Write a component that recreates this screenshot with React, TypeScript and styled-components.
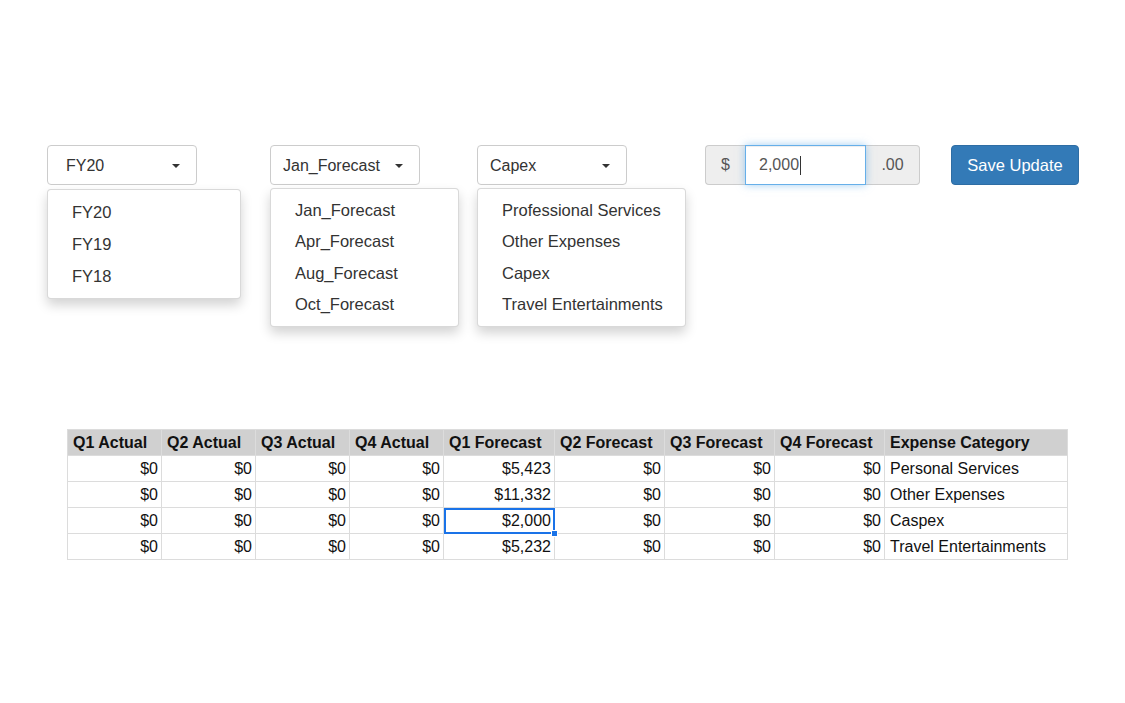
import React from "react";
import styled, { createGlobalStyle } from "styled-components";

const GlobalStyle = createGlobalStyle`
    html, body {
        margin: 0;
        padding: 0;
        background: #fff;
    }
    body {
        font-family: "Liberation Sans", Arial, Helvetica, sans-serif;
        color: #333;
    }
`

const dropdowns = [
    { value: "FY20", options: ["FY20", "FY19", "FY18"], padLeft: 18, menuWidth: 194, menuTop: 4, rowHeight: 32 },
    { value: "Jan_Forecast", options: ["Jan_Forecast", "Apr_Forecast", "Aug_Forecast", "Oct_Forecast"], padLeft: 12, menuWidth: 189, menuTop: 3, rowHeight: 31.3 },
    { value: "Capex", options: ["Professional Services", "Other Expenses", "Capex", "Travel Entertainments"], padLeft: 12, menuWidth: 209, menuTop: 3, rowHeight: 31.3 },
];

const rows = [
    { q1f: "$5,423", category: "Personal Services" },
    { q1f: "$11,332", category: "Other Expenses" },
    { q1f: "$2,000", category: "Caspex", selected: true },
    { q1f: "$5,232", category: "Travel Entertainments" },
];

const headers = ["Q1 Actual", "Q2 Actual", "Q3 Actual", "Q4 Actual", "Q1 Forecast", "Q2 Forecast", "Q3 Forecast", "Q4 Forecast", "Expense Category"];
const colWidths = [94, 94, 94, 94, 111, 110, 110, 110, 183];

const App = () => {
    return (
        <Page>
            <GlobalStyle />
            <Toolbar>
                {dropdowns.map(dd => (
                    <Dropdown key={dd.value}>
                        <DropButton padLeft={dd.padLeft}>
                            <span>{dd.value}</span>
                            <Caret />
                        </DropButton>
                        <Menu width={dd.menuWidth} top={dd.menuTop}>
                            {dd.options.map(opt => (
                                <MenuItem key={opt} rowHeight={dd.rowHeight}>{opt}</MenuItem>
                            ))}
                        </Menu>
                    </Dropdown>
                ))}
                <InputGroup>
                    <Addon width={40} first>$</Addon>
                    <AmountInput>
                        2,000<TextCursor />
                    </AmountInput>
                    <Addon width={54}>.00</Addon>
                </InputGroup>
                <SaveButton>Save Update</SaveButton>
            </Toolbar>

            <Grid>
                <colgroup>
                    {colWidths.map((w, i) => <col key={i} style={{ width: w }} />)}
                </colgroup>
                <thead>
                    <tr>
                        {headers.map(h => <HeadCell key={h}>{h}</HeadCell>)}
                    </tr>
                </thead>
                <tbody>
                    {rows.map(r => (
                        <tr key={r.category}>
                            <NumCell>$0</NumCell>
                            <NumCell>$0</NumCell>
                            <NumCell>$0</NumCell>
                            <NumCell>$0</NumCell>
                            <NumCell selected={r.selected}>
                                {r.q1f}
                                {r.selected && <FillHandle />}
                            </NumCell>
                            <NumCell>$0</NumCell>
                            <NumCell>$0</NumCell>
                            <NumCell>$0</NumCell>
                            <TextCell>{r.category}</TextCell>
                        </tr>
                    ))}
                </tbody>
            </Grid>
        </Page>
    );
};

const Page = styled.div`
    width: 1125px;
    min-height: 703px;
    padding-top: 145px;
    box-sizing: border-box;
`

const Toolbar = styled.div`
    display: grid;
    grid-template-columns: 223px 207px 228px 246px auto;
    align-items: start;
    padding-left: 47px;
    height: 40px;
`

const Dropdown = styled.div`
    position: relative;
`

const DropButton = styled.div<{ padLeft: number }>`
    width: 150px;
    height: 40px;
    box-sizing: border-box;
    display: flex;
    align-items: center;
    justify-content: space-between;
    padding: 1px 16px 0 ${props => props.padLeft}px;
    border: 1px solid #ccc;
    border-radius: 4px;
    background: #fff;
    font-size: 16px;
    color: #333;
`

const Caret = styled.span`
    width: 0;
    height: 0;
    border-left: 4px solid transparent;
    border-right: 4px solid transparent;
    border-top: 4px solid #333;
    margin-top: 1px;
`

const Menu = styled.ul<{ width: number; top: number }>`
    position: absolute;
    left: 0;
    top: ${props => 40 + props.top}px;
    width: ${props => props.width}px;
    box-sizing: border-box;
    margin: 0;
    padding: 6px 0;
    list-style: none;
    background: #fff;
    border: 1px solid rgba(0, 0, 0, 0.15);
    border-radius: 4px;
    box-shadow: 0 6px 12px rgba(0, 0, 0, 0.175);
    z-index: 10;
`

const MenuItem = styled.li<{ rowHeight: number }>`
    height: ${props => props.rowHeight}px;
    line-height: ${props => props.rowHeight}px;
    padding: 0 24px;
    font-size: 16.5px;
    color: #333;
    white-space: nowrap;
`

const InputGroup = styled.div`
    display: flex;
    height: 40px;
`

const Addon = styled.div<{ width: number; first?: boolean }>`
    width: ${props => props.width}px;
    box-sizing: border-box;
    display: flex;
    align-items: center;
    justify-content: center;
    background: #eee;
    border: 1px solid #ccc;
    border-radius: ${props => props.first ? "4px 0 0 4px" : "0 4px 4px 0"};
    ${props => props.first ? "border-right: none;" : "border-left: none;"}
    color: #555;
    font-size: 16px;
`

const AmountInput = styled.div`
    width: 121px;
    box-sizing: border-box;
    display: flex;
    align-items: center;
    padding: 0 13px;
    border: 1px solid #66afe9;
    box-shadow: inset 0 1px 1px rgba(0, 0, 0, 0.075), 0 0 8px rgba(102, 175, 233, 0.6);
    background: #fff;
    font-size: 16px;
    color: #555;
    position: relative;
    z-index: 1;
`

const TextCursor = styled.span`
    display: inline-block;
    width: 1px;
    height: 19px;
    background: #333;
    margin-left: 1px;
`

const SaveButton = styled.button`
    width: 128px;
    height: 40px;
    border: 1px solid #2e6da4;
    border-radius: 4px;
    background: #337ab7;
    color: #fff;
    font-family: "Liberation Sans", Arial, sans-serif;
    font-size: 16.5px;
    padding: 0;
`

const Grid = styled.table`
    margin: 244px 0 0 67px;
    width: 1000px;
    table-layout: fixed;
    border-collapse: collapse;
    font-family: "Liberation Sans", Arial, sans-serif;
    color: #111;
`

const HeadCell = styled.th`
    height: 25px;
    padding: 0 5px;
    background: #d0d0d0;
    border: 1px solid #dcdcdc;
    text-align: left;
    font-size: 16px;
    font-weight: bold;
    white-space: nowrap;
    overflow: hidden;
`

const NumCell = styled.td<{ selected?: boolean }>`
    position: relative;
    height: 25px;
    padding: 0 3px 0 5px;
    border: 1px solid #dcdcdc;
    text-align: right;
    font-size: 16px;
    white-space: nowrap;
    ${props => props.selected && `
        outline: 2px solid #1a73e8;
        outline-offset: -2px;
    `}
`

const FillHandle = styled.span`
    position: absolute;
    right: -4px;
    bottom: -4px;
    width: 7px;
    height: 7px;
    background: #1a73e8;
    border: 1px solid #fff;
    box-sizing: border-box;
    z-index: 2;
`

const TextCell = styled.td`
    height: 25px;
    padding: 0 5px;
    border: 1px solid #dcdcdc;
    text-align: left;
    font-size: 16px;
    white-space: nowrap;
`

export default App;
